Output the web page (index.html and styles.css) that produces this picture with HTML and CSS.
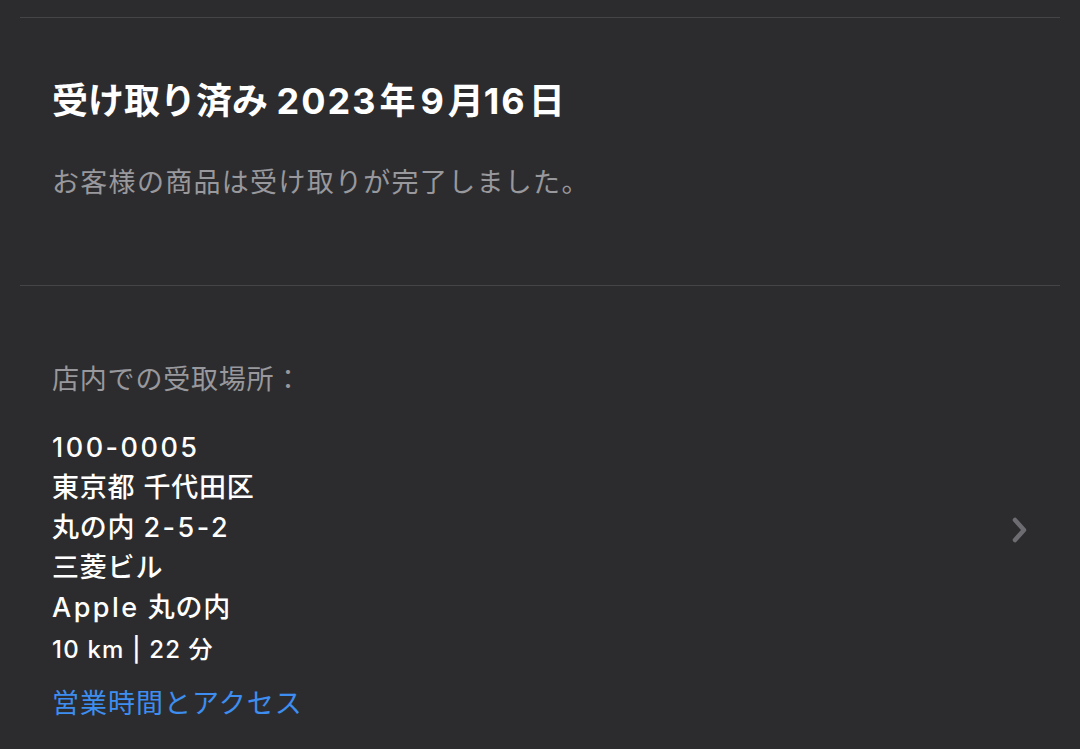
FILE: index.html
```html
<!DOCTYPE html>
<html lang="ja">
<head>
<meta charset="utf-8">
<title>受け取り済み</title>
<link rel="stylesheet" href="styles.css">
</head>
<body>
<div class="page">
  <div class="rule"></div>
  <section class="status">
    <h1 class="status-title">受け取り済み <span class="num">2023</span>年<span class="num lead">9</span>月<span class="num">16</span>日</h1>
    <p class="status-text">お客様の商品は受け取りが完了しました。</p>
  </section>
  <div class="rule"></div>
  <section class="pickup">
    <div class="pickup-info">
      <div class="pickup-label">店内での受取場所：</div>
      <div class="address">
        <div class="num">100-0005</div>
        <div>東京都 千代田区</div>
        <div>丸の内 <span class="num">2-5-2</span></div>
        <div>三菱ビル</div>
        <div><span class="num">Apple</span> 丸の内</div>
      </div>
      <div class="distance"><span class="num">10 km | 22</span> 分</div>
      <a class="store-link" href="#">営業時間とアクセス</a>
    </div>
    <svg class="chevron" width="18" height="28" viewBox="0 0 18 28">
      <path d="M4 4 L13 14 L4 24" fill="none" stroke="#6c6c71" stroke-width="4.5" stroke-linecap="round" stroke-linejoin="round"/>
    </svg>
  </section>
</div>
</body>
</html>
```

FILE: styles.css
```css
body {
  margin: 0;
  background: #2c2c2e;
  font-family: "Inter", "Noto Sans CJK JP", sans-serif;
  color: #ffffff;
}
.page {
  padding: 17px 20px 0;
}
.rule {
  height: 1px;
  background: #454548;
}
.num {
  letter-spacing: 2.5px;
}

.status {
  padding: 61px 32px 84px;
}
.status-title {
  margin: 0;
  font-size: 36px;
  line-height: 44px;
  font-weight: 700;
}
.status-title .num {
  letter-spacing: 2px;
  padding-right: 2px;
}
.status-title .lead {
  padding-left: 5px;
}
.status-text {
  margin: 42px 0 0;
  font-size: 27px;
  line-height: 36px;
  color: #98989d;
  letter-spacing: 1.3px;
}

.pickup {
  display: flex;
  align-items: center;
  padding: 74px 32px 26px;
}
.pickup-info {
  flex: 1;
  font-size: 27px;
  line-height: 40px;
  letter-spacing: 0.8px;
}
.pickup-label {
  color: #98989d;
}
.address {
  margin-top: 28px;
  font-weight: 500;
}
.distance {
  margin-top: 2px;
  font-size: 24px;
  font-weight: 500;
}
.distance .num {
  letter-spacing: 1.2px;
}
.store-link {
  display: block;
  margin-top: 14px;
  color: #3d8ef0;
  text-decoration: none;
  letter-spacing: 1px;
}
.chevron {
  margin: 0 -1px 24px 0;
}
```
